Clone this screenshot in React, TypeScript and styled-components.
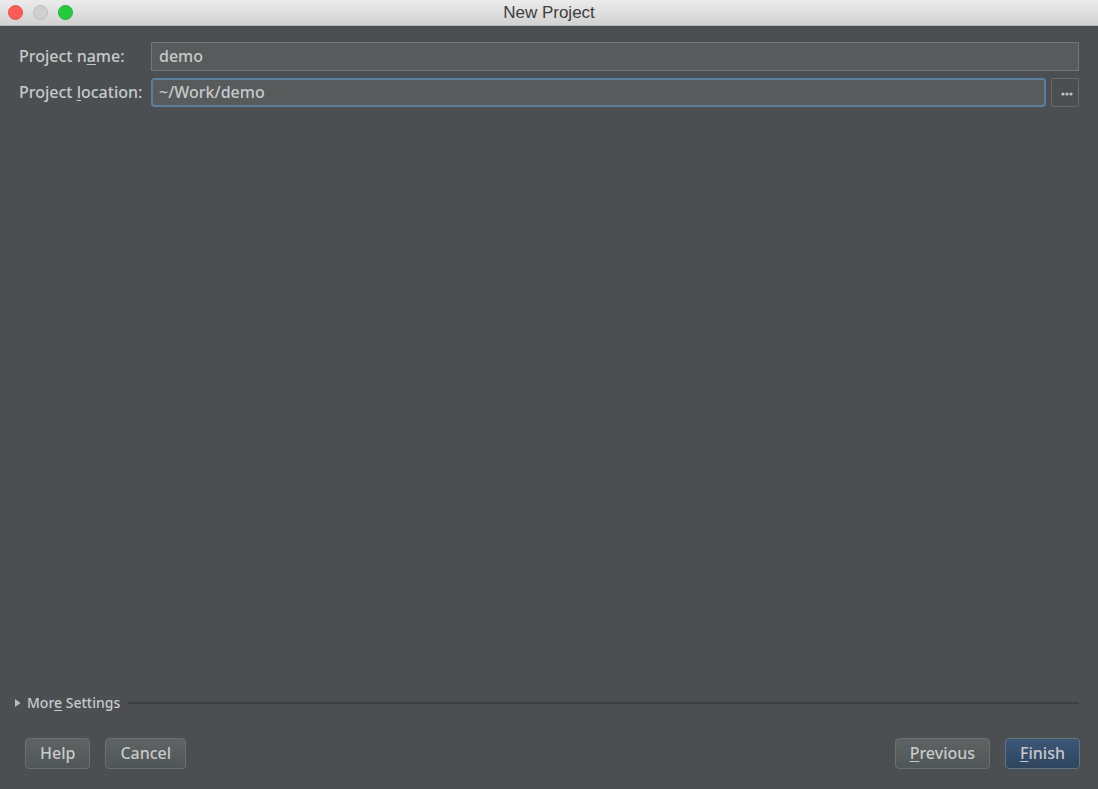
import React from "react";
import styled, { createGlobalStyle, css } from "styled-components";

const GlobalStyle = createGlobalStyle`
  * { box-sizing: border-box; }
  body {
    margin: 0;
    background: #4b4f51;
    color: #c8c9ca;
    font-family: "Noto Sans", "Open Sans", sans-serif;
    font-size: 16px;
    font-weight: 500;
    line-height: 22px;
  }
  input, button { font: inherit; color: inherit; outline: none; }
`;

const Dialog = styled.div`
  min-height: 100vh;
  display: flex;
  flex-direction: column;
`;

const TitleBar = styled.header`
  height: 26px;
  flex: none;
  display: grid;
  grid-template-columns: 1fr auto 1fr;
  align-items: center;
  padding: 0 8px;
  background: linear-gradient(#ebebeb, #d2d2d2);
  border-bottom: 1px solid #b4b5b6;
`;

const WindowControls = styled.div`
  display: flex;
  gap: 10px;
`;

const WindowButton = styled.button<{ $fill: string; $edge: string }>`
  width: 15px;
  height: 15px;
  padding: 0;
  border-radius: 50%;
  background: ${(p) => p.$fill};
  border: 1px solid ${(p) => p.$edge};
`;

const Title = styled.h1`
  margin: 0;
  font: 400 17px/24px "Liberation Sans", Arial, sans-serif;
  color: #3e3e3e;
`;

const Form = styled.form`
  flex: 1;
  display: flex;
  flex-direction: column;
`;

const Fields = styled.div`
  display: flex;
  flex-direction: column;
  gap: 7px;
  padding: 16px 19px 0 19px;
`;

const Row = styled.div`
  display: flex;
  align-items: center;
`;

const Label = styled.label`
  width: 132px;
  flex: none;
  padding-bottom: 2px;
  white-space: nowrap;
`;

const Mnemonic = styled.span`
  text-decoration: underline;
  text-decoration-thickness: 1px;
  text-underline-offset: 2px;
`;

const TextField = styled.input<{ $active?: boolean }>`
  flex: 1;
  min-width: 0;
  height: 29px;
  padding: 0 7px 2px;
  background: #575b5b;
  border: 1px solid #747879;
  ${(p) =>
    p.$active &&
    css`
      padding: 0 6px 2px;
      border: 2px solid #5b7e9c;
      border-radius: 4px;
      box-shadow: 0 0 1px #47698a;
    `}
`;

const BrowseButton = styled.button`
  width: 28px;
  height: 29px;
  margin-left: 5px;
  padding: 2px 0 0 3px;
  display: flex;
  align-items: center;
  justify-content: center;
  background: #4b4f51;
  border: 1px solid #686b6d;
  border-radius: 2px;
`;

const MoreSettings = styled.div`
  display: flex;
  align-items: center;
  gap: 8px;
  margin-top: auto;
  padding: 0 19px 0 14px;
`;

const Disclosure = styled.button`
  display: flex;
  align-items: center;
  gap: 6px;
  padding: 0;
  border: 0;
  background: none;
  font-size: 14px;
  line-height: 20px;
`;

const Rule = styled.hr`
  flex: 1;
  height: 2px;
  margin: 0;
  border: 0;
  background: #3d4042;
`;

const Actions = styled.footer`
  display: flex;
  justify-content: space-between;
  padding: 25px 18px 20px 25px;
`;

const ActionGroup = styled.div`
  display: flex;
  gap: 15px;
`;

const ActionButton = styled.button<{ $primary?: boolean }>`
  height: 31px;
  padding: 0 14px 2px;
  line-height: 26px;
  border-radius: 4px;
  border: 1px solid ${(p) => (p.$primary ? "#637381" : "#6b6f70")};
  background: ${(p) =>
    p.$primary
      ? "linear-gradient(#3b5778, #30455e)"
      : "linear-gradient(#5e6363, #505556)"};
`;

export default function App() {
  return (
    <Dialog>
      <GlobalStyle />
      <TitleBar>
        <WindowControls>
          <WindowButton type="button" aria-label="Close" $fill="#fc5b57" $edge="#e2554f" />
          <WindowButton type="button" aria-label="Minimize" disabled $fill="#cfcfcf" $edge="#bebebe" />
          <WindowButton type="button" aria-label="Zoom" $fill="#22ca3d" $edge="#22b236" />
        </WindowControls>
        <Title>New Project</Title>
      </TitleBar>
      <Form onSubmit={(e) => e.preventDefault()}>
        <Fields>
          <Row>
            <Label htmlFor="name">
              Project n<Mnemonic>a</Mnemonic>me:
            </Label>
            <TextField id="name" defaultValue="demo" />
          </Row>
          <Row>
            <Label htmlFor="location">
              Project <Mnemonic>l</Mnemonic>ocation:
            </Label>
            <TextField id="location" defaultValue="~/Work/demo" spellCheck={false} $active />
            <BrowseButton type="button" aria-label="Browse">
              <svg width="12" height="4" viewBox="0 0 12 4" fill="#c3c4c5" aria-hidden="true">
                <circle cx="2" cy="2" r="1.6" />
                <circle cx="6" cy="2" r="1.6" />
                <circle cx="10" cy="2" r="1.6" />
              </svg>
            </BrowseButton>
          </Row>
        </Fields>
        <MoreSettings>
          <Disclosure type="button" aria-expanded={false}>
            <svg width="7" height="10" viewBox="0 0 7 10" fill="#b9bbbc" aria-hidden="true">
              <path d="M1 1L6.5 5L1 9Z" />
            </svg>
            <span>
              Mor<Mnemonic>e</Mnemonic> Settings
            </span>
          </Disclosure>
          <Rule />
        </MoreSettings>
        <Actions>
          <ActionGroup>
            <ActionButton type="button">Help</ActionButton>
            <ActionButton type="button">Cancel</ActionButton>
          </ActionGroup>
          <ActionGroup>
            <ActionButton type="button">
              <Mnemonic>P</Mnemonic>revious
            </ActionButton>
            <ActionButton type="submit" $primary>
              <Mnemonic>F</Mnemonic>inish
            </ActionButton>
          </ActionGroup>
        </Actions>
      </Form>
    </Dialog>
  );
}
